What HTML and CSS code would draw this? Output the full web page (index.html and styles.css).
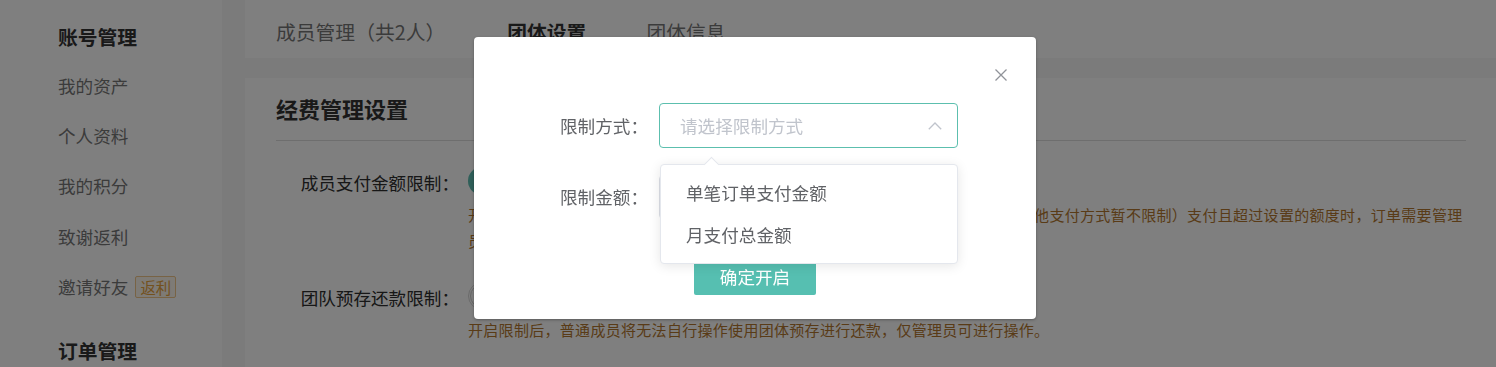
FILE: index.html
```html
<!DOCTYPE html>
<html lang="zh-CN">
<head>
<meta charset="utf-8">
<title>团体设置</title>
<link rel="stylesheet" href="styles.css">
</head>
<body>
<div class="page">
  <aside class="sidebar">
    <div class="side-title">账号管理</div>
    <div class="side-item">我的资产</div>
    <div class="side-item">个人资料</div>
    <div class="side-item">我的积分</div>
    <div class="side-item">致谢返利</div>
    <div class="side-item">邀请好友<span class="badge">返利</span></div>
    <div class="side-title side-title-2">订单管理</div>
  </aside>
  <main class="main">
    <nav class="tabs">
      <span class="tab tab-first">成员管理（共2人）</span>
      <span class="tab tab-active">团体设置</span>
      <span class="tab">团体信息</span>
    </nav>
    <section class="card">
      <h2 class="card-title">经费管理设置</h2>
      <div class="divider"></div>
      <div class="setting">
        <div class="setting-label">成员支付金额限制：</div>
        <div class="setting-body">
          <span class="switch switch-on"><span class="knob"></span></span>
          <p class="desc">开启限制后，普通成员使用团体账户下订单时，若使用团体账户余额或团体预存（其他支付方式暂不限制）支付且超过设置的额度时，订单需要管理员审批通过后方可支付。</p>
        </div>
      </div>
      <div class="setting setting-2">
        <div class="setting-label">团队预存还款限制：</div>
        <div class="setting-body">
          <span class="switch switch-off"><span class="knob"></span></span>
          <p class="desc">开启限制后，普通成员将无法自行操作使用团体预存进行还款，仅管理员可进行操作。</p>
        </div>
      </div>
    </section>
  </main>
</div>

<div class="overlay"></div>
<div class="modal">
  <div class="modal-header">
    <svg class="close" width="12" height="12" viewBox="0 0 12 12"><path d="M0.5 0.5L11.5 11.5M11.5 0.5L0.5 11.5" stroke="#909399" stroke-width="1.3" fill="none"/></svg>
  </div>
  <div class="modal-body">
    <div class="form-row">
      <label class="form-label">限制方式：</label>
      <div class="select-wrap">
        <div class="select">
          <span class="placeholder">请选择限制方式</span>
          <svg class="chevron" width="14" height="8" viewBox="0 0 14 8"><path d="M0.8 7.2L7 1L13.2 7.2" stroke="#c0c4cc" stroke-width="1.3" fill="none"/></svg>
        </div>
        <div class="dropdown">
          <span class="dropdown-arrow"></span>
          <div class="dropdown-item">单笔订单支付金额</div>
          <div class="dropdown-item">月支付总金额</div>
        </div>
      </div>
    </div>
    <div class="form-row form-row-2">
      <label class="form-label">限制金额：</label>
      <div class="input"></div>
    </div>
    <div class="actions">
      <button class="btn">确定开启</button>
    </div>
  </div>
</div>
</body>
</html>
```
FILE: styles.css
```css
* { box-sizing: border-box; }
html, body { margin: 0; padding: 0; }
body {
  width: 1496px;
  height: 367px;
  overflow: hidden;
  background: #f6f6f6;
  font-family: "Noto Sans CJK SC", "Noto Sans", sans-serif;
  color: #333;
}
.page {
  display: flex;
  height: 367px;
}
.sidebar {
  width: 222px;
  flex: none;
  background: #fff;
  padding: 22px 0 0 58px;
}
.side-title {
  font-size: 19.8px;
  font-weight: 700;
  line-height: 30px;
  color: #333;
  margin-bottom: 9px;
}
.side-title-2 { margin-top: 24px; }
.side-item {
  font-size: 17.6px;
  line-height: 50.2px;
  color: #777;
  display: flex;
  align-items: center;
}
.badge {
  margin-left: 7px;
  height: 22px;
  padding: 0 4px;
  border: 1px solid #f0c78a;
  background: #fdf6ec;
  color: #e6a23c;
  font-size: 15.4px;
  line-height: 20px;
  border-radius: 2px;
}
.main {
  margin-left: 23px;
  flex: 1;
  display: flex;
  flex-direction: column;
  gap: 20px;
}
.tabs {
  height: 58px;
  background: #fff;
  display: flex;
  align-items: center;
  padding: 6px 0 0 31px;
  gap: 60px;
}
.tab {
  font-size: 19.8px;
  line-height: 30px;
  color: #777;
}
.tab-first { margin-right: 2px; }
.tab-active {
  color: #333;
  font-weight: 700;
}
.card {
  flex: 1;
  background: #fff;
  padding: 15px 30px 0 31px;
}
.card-title {
  margin: 0;
  font-size: 22px;
  font-weight: 700;
  line-height: 30px;
  color: #333;
}
.divider {
  margin-top: 17px;
  height: 1px;
  background: #ddd;
}
.setting {
  display: flex;
  align-items: flex-start;
  margin-top: 26px;
}
.setting-2 { margin-top: 28px; }
.setting-label {
  width: 192px;
  flex: none;
  text-align: right;
  padding-right: 9px;
  font-size: 17.6px;
  line-height: 32px;
  color: #2e2e2e;
}
.setting-body { flex: 1; }
.switch {
  display: block;
  width: 56px;
  height: 28px;
  border-radius: 14px;
  position: relative;
}
.switch-on { background: #5ebfb2; }
.switch-off { background: #fff; border: 1px solid #d6d6d6; }
.knob {
  position: absolute;
  top: 2px;
  width: 24px;
  height: 24px;
  border-radius: 50%;
  background: #fff;
}
.switch-on .knob { right: 2px; }
.switch-off .knob { left: 1px; top: 1px; border: 1px solid #ccc; }
.desc {
  margin: 7px 0 0;
  font-size: 15px;
  letter-spacing: 0.3px;
  line-height: 26px;
  color: #b3772f;
}

.overlay {
  position: fixed;
  inset: 0;
  background: rgba(0, 0, 0, 0.5);
}
.modal {
  position: absolute;
  left: 474px;
  top: 37px;
  width: 562px;
  height: 282px;
  background: #fff;
  border-radius: 4px;
  box-shadow: 0 1px 3px rgba(0,0,0,0.3);
}
.modal-header {
  height: 66px;
  display: flex;
  justify-content: flex-end;
  padding: 32px 29px 0 0;
}
.close { display: block; }
.modal-body {
  padding: 0 0 0 74px;
}
.form-row {
  display: flex;
  align-items: center;
}
.form-row-2 { margin-top: 27px; }
.form-label {
  width: 111px;
  flex: none;
  padding-right: 11px;
  text-align: right;
  font-size: 17.6px;
  line-height: 44px;
  color: #606266;
}
.select-wrap {
  position: relative;
  width: 299px;
}
.select {
  height: 45px;
  border: 1px solid #5cbfae;
  border-radius: 4px;
  display: flex;
  align-items: center;
  justify-content: space-between;
  padding: 0 15px 0 20px;
}
.placeholder {
  font-size: 17.6px;
  color: #c0c4cc;
  line-height: 24px;
}
.chevron { display: block; }
.input {
  width: 299px;
  height: 44px;
  border: 1px solid #dcdfe6;
  border-radius: 4px;
}
.actions {
  display: flex;
  padding-right: 74px;
  justify-content: center;
  margin-top: 40px;
}
.btn {
  width: 122px;
  height: 36px;
  border: none;
  border-radius: 2px;
  background: #56bfb1;
  color: #fff;
  font-family: inherit;
  font-size: 17.6px;
  line-height: 34px;
  padding: 0;
}
.dropdown {
  position: absolute;
  left: 1px;
  right: 0;
  top: 61px;
  z-index: 2;
  background: #fff;
  border: 1px solid #e4e7ed;
  border-radius: 4px;
  box-shadow: 0 2px 12px rgba(0,0,0,0.1);
  padding: 7px 0;
}
.dropdown-arrow {
  position: absolute;
  top: -6px;
  left: 45px;
  width: 11px;
  height: 11px;
  background: #fff;
  border-top: 1px solid #e4e7ed;
  border-left: 1px solid #e4e7ed;
  transform: rotate(45deg);
}
.dropdown-item {
  height: 42px;
  line-height: 42px;
  padding-left: 25px;
  font-size: 17.6px;
  color: #606266;
}
```
